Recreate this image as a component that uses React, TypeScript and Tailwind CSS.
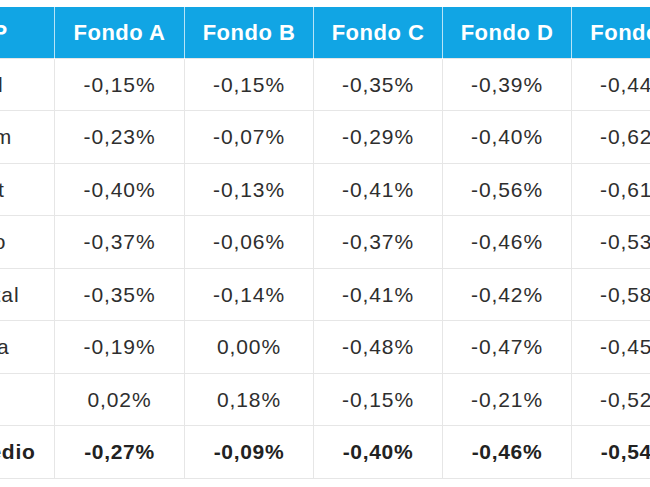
const FUNDS = ["Fondo A", "Fondo B", "Fondo C", "Fondo D", "Fondo E"];

const ROWS = [
  { afp: "Capital", values: ["-0,15%", "-0,15%", "-0,35%", "-0,39%", "-0,44%"] },
  { afp: "Cuprum", values: ["-0,23%", "-0,07%", "-0,29%", "-0,40%", "-0,62%"] },
  { afp: "Habitat", values: ["-0,40%", "-0,13%", "-0,41%", "-0,56%", "-0,61%"] },
  { afp: "Modelo", values: ["-0,37%", "-0,06%", "-0,37%", "-0,46%", "-0,53%"] },
  { afp: "Planvital", values: ["-0,35%", "-0,14%", "-0,41%", "-0,42%", "-0,58%"] },
  { afp: "Provida", values: ["-0,19%", "0,00%", "-0,48%", "-0,47%", "-0,45%"] },
  { afp: "Uno", values: ["0,02%", "0,18%", "-0,15%", "-0,21%", "-0,52%"] },
];

const AVERAGE = { afp: "Promedio", values: ["-0,27%", "-0,09%", "-0,40%", "-0,46%", "-0,54%"] };

export default function App() {
  return (
    <div
      className="w-[650px] h-[487px] overflow-hidden bg-white pt-[7px]"
      style={{ fontFamily: '"Liberation Sans", Arial, sans-serif' }}
    >
      <table className="ml-[-85px] w-[785px] table-fixed border-collapse">
        <colgroup>
          <col className="w-[139px]" />
          <col className="w-[130px]" />
          <col className="w-[129px]" />
          <col className="w-[129px]" />
          <col className="w-[129px]" />
          <col className="w-[129px]" />
        </colgroup>
        <thead>
          <tr className="h-[51px] bg-[#11a5e4]">
            <th className="border-x border-white/70 text-center text-[22px] font-bold tracking-[0.5px] text-white">
              AFP
            </th>
            {FUNDS.map((f) => (
              <th
                key={f}
                className="border-x border-white/70 text-center text-[22px] font-bold tracking-[0.5px] text-white"
              >
                {f}
              </th>
            ))}
          </tr>
        </thead>
        <tbody>
          {ROWS.map((r) => (
            <tr key={r.afp} className="h-[52.5px]">
              <td className="border border-[#e6e6e6] pl-4 text-left text-[21px] tracking-[0.9px] text-[#2e2e2e]">
                {r.afp}
              </td>
              {r.values.map((v, i) => (
                <td
                  key={i}
                  className="border border-[#e6e6e6] text-center text-[21px] tracking-[0.9px] text-[#2e2e2e]"
                >
                  {v}
                </td>
              ))}
            </tr>
          ))}
          <tr className="h-[52.5px]">
            <td className="border border-[#e6e6e6] pl-[17px] text-left text-[21px] font-bold tracking-[0.7px] text-[#222]">
              {AVERAGE.afp}
            </td>
            {AVERAGE.values.map((v, i) => (
              <td
                key={i}
                className="border border-[#e6e6e6] text-center text-[21px] font-bold tracking-[0.7px] text-[#222]"
              >
                {v}
              </td>
            ))}
          </tr>
        </tbody>
      </table>
    </div>
  );
}
